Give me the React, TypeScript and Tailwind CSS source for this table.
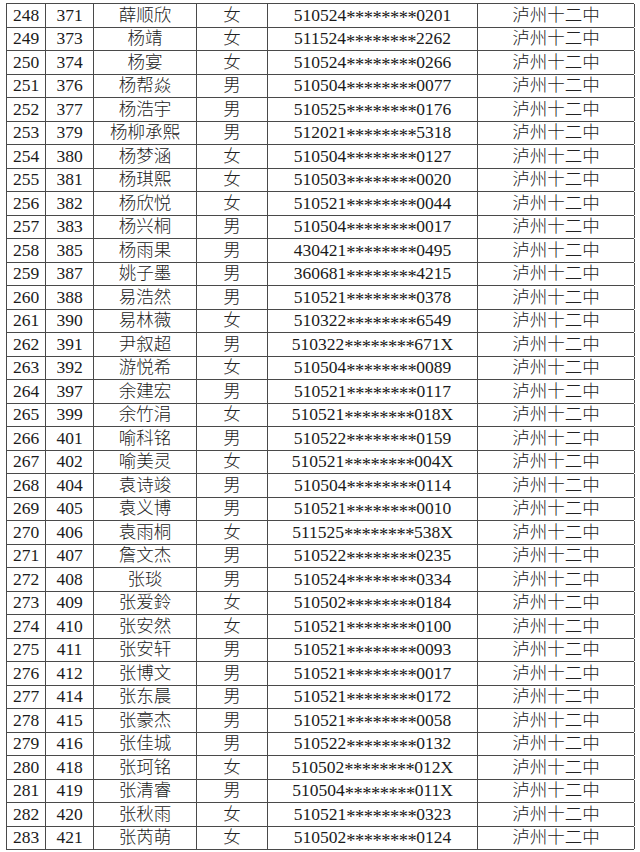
import React from "react";

const raw = `248 371 薛顺欣 女 510524********0201
249 373 杨靖 女 511524********2262
250 374 杨宴 女 510524********0266
251 376 杨帮焱 男 510504********0077
252 377 杨浩宇 男 510525********0176
253 379 杨柳承熙 男 512021********5318
254 380 杨梦涵 女 510504********0127
255 381 杨琪熙 女 510503********0020
256 382 杨欣悦 女 510521********0044
257 383 杨兴桐 男 510504********0017
258 385 杨雨果 男 430421********0495
259 387 姚子墨 男 360681********4215
260 388 易浩然 男 510521********0378
261 390 易林薇 女 510322********6549
262 391 尹叙超 男 510322********671X
263 392 游悦希 女 510504********0089
264 397 余建宏 男 510521********0117
265 399 余竹涓 女 510521********018X
266 401 喻科铭 男 510522********0159
267 402 喻美灵 女 510521********004X
268 404 袁诗竣 男 510504********0114
269 405 袁义博 男 510521********0010
270 406 袁雨桐 女 511525********538X
271 407 詹文杰 男 510522********0235
272 408 张琰 男 510524********0334
273 409 张爱鈴 女 510502********0184
274 410 张安然 女 510521********0100
275 411 张安轩 男 510521********0093
276 412 张博文 男 510521********0017
277 414 张东晨 男 510521********0172
278 415 张豪杰 男 510521********0058
279 416 张佳城 男 510522********0132
280 418 张珂铭 女 510502********012X
281 419 张清睿 男 510504********011X
282 420 张秋雨 女 510521********0323
283 421 张芮萌 女 510502********0124`;

const rows = raw.split("\n").map((l) => l.split(" "));

function Id({ v }: { v: string }) {
  const m = v.match(/^(\d+)(\*+)(.+)$/);
  if (!m) return <>{v}</>;
  return (
    <>
      {m[1]}
      <span className="relative top-[3px] text-[18.5px] tracking-[-0.5px]">{m[2]}</span>
      {m[3]}
    </>
  );
}

export default function App() {
  return (
    <div className="w-[640px] h-[852px] bg-white pt-[3px] pl-[6px] text-[#1a1a1a] text-[17.5px] leading-none [font-family:'Liberation_Serif','Noto_Sans_CJK_SC',serif]">
      <div className="w-[628px] border-t border-l border-[#4a4a4a]">
        {rows.map((r) => (
          <div
            key={r[0]}
            className="grid grid-cols-[39px_48px_103px_71px_210px_157px] h-[23.5px] border-b border-[#4a4a4a]"
          >
            <div className="flex items-center justify-center border-r border-[#4a4a4a]">{r[0]}</div>
            <div className="flex items-center justify-center border-r border-[#4a4a4a]">{r[1]}</div>
            <div className="flex items-center justify-center border-r border-[#4a4a4a] font-light text-[#222]">{r[2]}</div>
            <div className="flex items-center justify-center border-r border-[#4a4a4a] font-light text-[#222]">{r[3]}</div>
            <div className="flex items-center justify-center border-r border-[#4a4a4a]">
              <Id v={r[4]} />
            </div>
            <div className="flex items-center justify-center border-r border-[#4a4a4a] font-light text-[#222]">泸州十二中</div>
          </div>
        ))}
      </div>
    </div>
  );
}
